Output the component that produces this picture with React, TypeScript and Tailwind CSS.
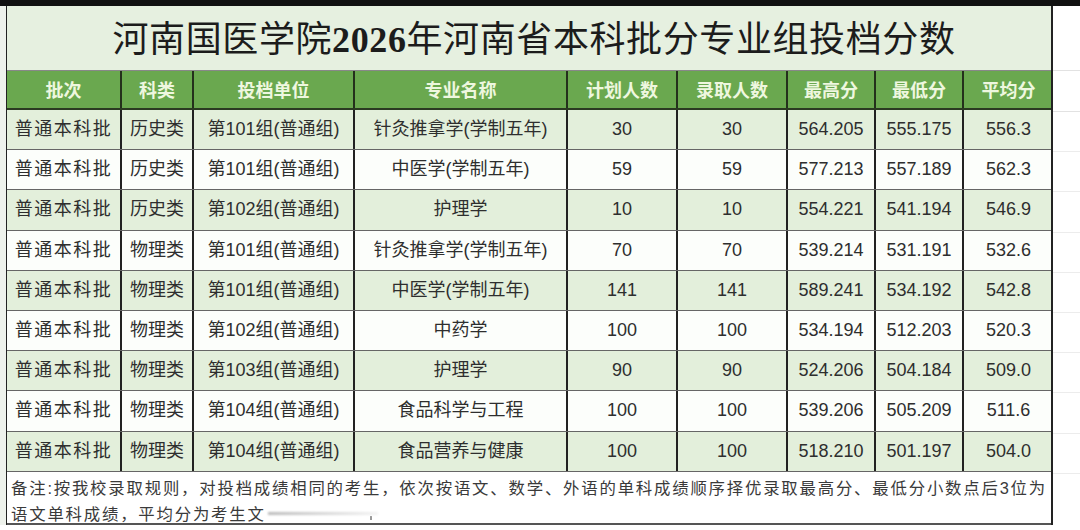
import React from 'react';

const cols = 'grid-cols-[115px_72px_161px_213px_110px_110px_88px_88px_89px]';

const headers = ['批次', '科类', '投档单位', '专业名称', '计划人数', '录取人数', '最高分', '最低分', '平均分'];

const rows = [
  ['普通本科批', '历史类', '第101组(普通组)', '针灸推拿学(学制五年)', '30', '30', '564.205', '555.175', '556.3'],
  ['普通本科批', '历史类', '第101组(普通组)', '中医学(学制五年)', '59', '59', '577.213', '557.189', '562.3'],
  ['普通本科批', '历史类', '第102组(普通组)', '护理学', '10', '10', '554.221', '541.194', '546.9'],
  ['普通本科批', '物理类', '第101组(普通组)', '针灸推拿学(学制五年)', '70', '70', '539.214', '531.191', '532.6'],
  ['普通本科批', '物理类', '第101组(普通组)', '中医学(学制五年)', '141', '141', '589.241', '534.192', '542.8'],
  ['普通本科批', '物理类', '第102组(普通组)', '中药学', '100', '100', '534.194', '512.203', '520.3'],
  ['普通本科批', '物理类', '第103组(普通组)', '护理学', '90', '90', '524.206', '504.184', '509.0'],
  ['普通本科批', '物理类', '第104组(普通组)', '食品科学与工程', '100', '100', '539.206', '505.209', '511.6'],
  ['普通本科批', '物理类', '第104组(普通组)', '食品营养与健康', '100', '100', '518.210', '501.197', '504.0'],
];

export default function App() {
  return (
    <div className="w-[1080px] h-[530px] overflow-hidden bg-white font-['Liberation_Sans','Noto_Sans_CJK_SC',sans-serif]">
      {/* top dark strip */}
      <div className="h-[6px] bg-[#111]" />

      <div className="flex">
        {/* left gutter */}
        <div className="w-[6px] bg-[#eef2ec]" />

        {/* sheet */}
        <div className="w-[1047px] border-r-2 border-l border-[#222]">
          {/* title */}
          <div className="h-[65px] bg-[#e6f0e0] flex items-center justify-center border-b border-[#888]">
            <h1 className="text-[36px] font-normal tracking-[0.6px] text-[#1c1c1c] font-['Noto_Sans_CJK_SC',sans-serif] leading-none pl-[10px]">
              河南国医学院<span className="font-['Liberation_Serif','Noto_Sans_CJK_SC',serif] font-bold">2026</span>年河南省本科批分专业组投档分数
            </h1>
          </div>

          {/* header */}
          <div className={`grid ${cols} h-[39px] bg-[#6aa84f] border-b-2 border-[#2b3a22]`}>
            {headers.map((h, i) => (
              <div
                key={h}
                className={`flex items-center justify-center text-[18px] font-bold text-[#eef7df] font-['Noto_Sans_CJK_SC',sans-serif] ${
                  i < headers.length - 1 ? 'border-r-2 border-[#24301c]' : ''
                }`}
              >
                {h}
              </div>
            ))}
          </div>

          {/* data */}
          {rows.map((r, ri) => (
            <div
              key={ri}
              className={`grid ${cols} h-[40.2px] border-b border-[#666] ${ri % 2 === 0 ? 'bg-[#e3efdb]' : 'bg-[#fcfefb]'}`}
            >
              {r.map((c, ci) => (
                <div
                  key={ci}
                  className={`flex items-center justify-center text-[18px] text-[#2e2e2e] whitespace-nowrap ${
                    ci < r.length - 1 ? 'border-r-2 border-[#222]' : ''
                  } ${ci === 0 ? 'tracking-[1.5px]' : ''}`}
                >
                  {c}
                </div>
              ))}
            </div>
          ))}

          {/* note */}
          <div className="h-[53px] px-[4px] pt-[3px] border-b-2 border-[#555] text-[16.4px] leading-[26px] text-[#3a3a3a] tracking-[1.8px] bg-white">
            <div className="whitespace-nowrap">备注:按我校录取规则，对投档成绩相同的考生，依次按语文、数学、外语的单科成绩顺序择优录取最高分、最低分小数点后3位为</div>
            <div className="flex items-center whitespace-nowrap">
              <span>语文单科成绩，平均分为考生文</span>
              <span className="ml-[2px] h-[3px] w-[110px] bg-gradient-to-r from-[#bbb] to-[#f3f3f3] blur-[1px]" />
              <span className="ml-[-8px] mt-[8px] h-[4px] w-[2px] bg-[#999]" />
            </div>
          </div>
        </div>

        {/* right spreadsheet area */}
        <div className="flex-1 flex flex-col">
          <div className="h-[65px] border-b border-[#e2e2e2]" />
          <div className="h-[41px] border-b border-[#e2e2e2]" />
          {rows.map((_, i) => (
            <div key={i} className="h-[40.2px] border-b border-[#ececec]" />
          ))}
        </div>
      </div>
    </div>
  );
}
